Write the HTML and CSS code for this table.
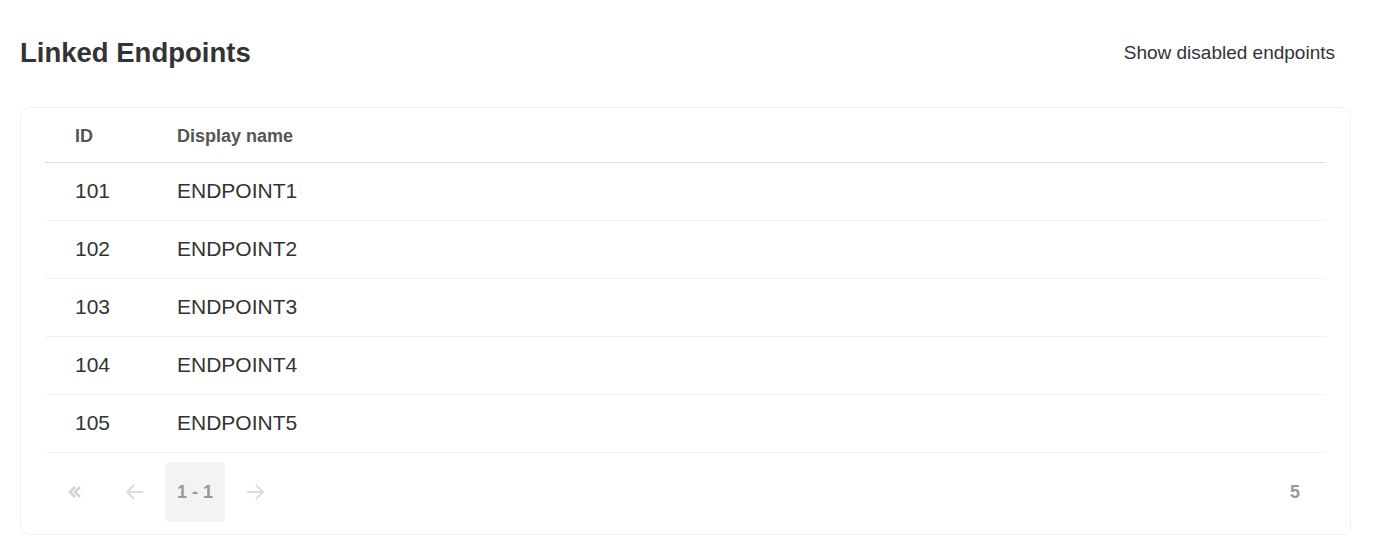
FILE: index.html
```html
<!DOCTYPE html>
<html>
<head>
<meta charset="utf-8">
<link rel="stylesheet" href="styles.css">
</head>
<body>
<div class="page">
  <div class="header">
    <h1 class="title">Linked Endpoints</h1>
    <button class="toggle">Show disabled endpoints</button>
  </div>
  <div class="card">
    <table class="table">
      <thead>
        <tr><th class="col-id">ID</th><th>Display name</th></tr>
      </thead>
      <tbody>
        <tr><td class="col-id">101</td><td>ENDPOINT1</td></tr>
        <tr><td class="col-id">102</td><td>ENDPOINT2</td></tr>
        <tr><td class="col-id">103</td><td>ENDPOINT3</td></tr>
        <tr><td class="col-id">104</td><td>ENDPOINT4</td></tr>
        <tr><td class="col-id">105</td><td>ENDPOINT5</td></tr>
      </tbody>
    </table>
    <div class="pager">
      <div class="pager-left">
        <span class="pbtn">
          <svg width="20" height="20" viewBox="0 0 20 20"><path d="M10 5 L5 10 L10 15 M15 5 L10 10 L15 15" fill="none" stroke="#d4d4d4" stroke-width="2.6"/></svg>
        </span>
        <span class="pbtn">
          <svg width="22" height="20" viewBox="0 0 22 20"><path d="M19 10 H3 M10 3 L3 10 L10 17" fill="none" stroke="#dcdcdc" stroke-width="1.8"/></svg>
        </span>
        <span class="pcur">1 - 1</span>
        <span class="pbtn">
          <svg width="22" height="20" viewBox="0 0 22 20"><path d="M3 10 H19 M12 3 L19 10 L12 17" fill="none" stroke="#dcdcdc" stroke-width="1.8"/></svg>
        </span>
      </div>
      <span class="total">5</span>
    </div>
  </div>
</div>
</body>
</html>
```
FILE: styles.css
```css
* { box-sizing: border-box; }
html, body { margin: 0; padding: 0; background: #fff; }
body { font-family: "Liberation Sans", Arial, sans-serif; color: #333; }
.page { padding: 20px 28px 0 20px; }
.header {
  display: flex;
  justify-content: space-between;
  align-items: center;
  height: 65px;
  margin-bottom: 22px;
}
.title {
  margin: 0;
  font-size: 27.5px;
  font-weight: bold;
  color: #333;
}
.toggle {
  border: none;
  background: none;
  font-family: inherit;
  font-size: 19px;
  color: #333;
  padding: 0 16px 0 0;
  height: 40px;
  cursor: pointer;
}
.card {
  border: 1px solid #f0f0f0;
  border-radius: 10px;
  padding: 0 24px;
}
.table {
  width: 100%;
  border-collapse: collapse;
}
.table th {
  text-align: left;
  font-size: 18px;
  font-weight: bold;
  color: #555;
  height: 54px;
  border-bottom: 1px solid #dedede;
  padding: 3px 0 0 0;
}
.table td {
  font-size: 21px;
  color: #333;
  height: 58px;
  border-bottom: 1px solid #f2f2f2;
  padding: 0;
}
.table .col-id { width: 132px; padding-left: 30px; }
.pager {
  display: flex;
  justify-content: space-between;
  align-items: center;
  height: 81px;
  padding: 0 0 2px 0;
}
.pager-left { display: flex; align-items: center; }
.pbtn {
  width: 60px;
  height: 60px;
  display: flex;
  align-items: center;
  justify-content: center;
}
.pcur {
  width: 60px;
  height: 60px;
  background: #f3f3f3;
  border-radius: 5px;
  display: flex;
  align-items: center;
  justify-content: center;
  font-size: 18px;
  font-weight: bold;
  color: #999;
}
.total {
  font-size: 18px;
  font-weight: bold;
  color: #999;
  margin-right: 26px;
}
```
